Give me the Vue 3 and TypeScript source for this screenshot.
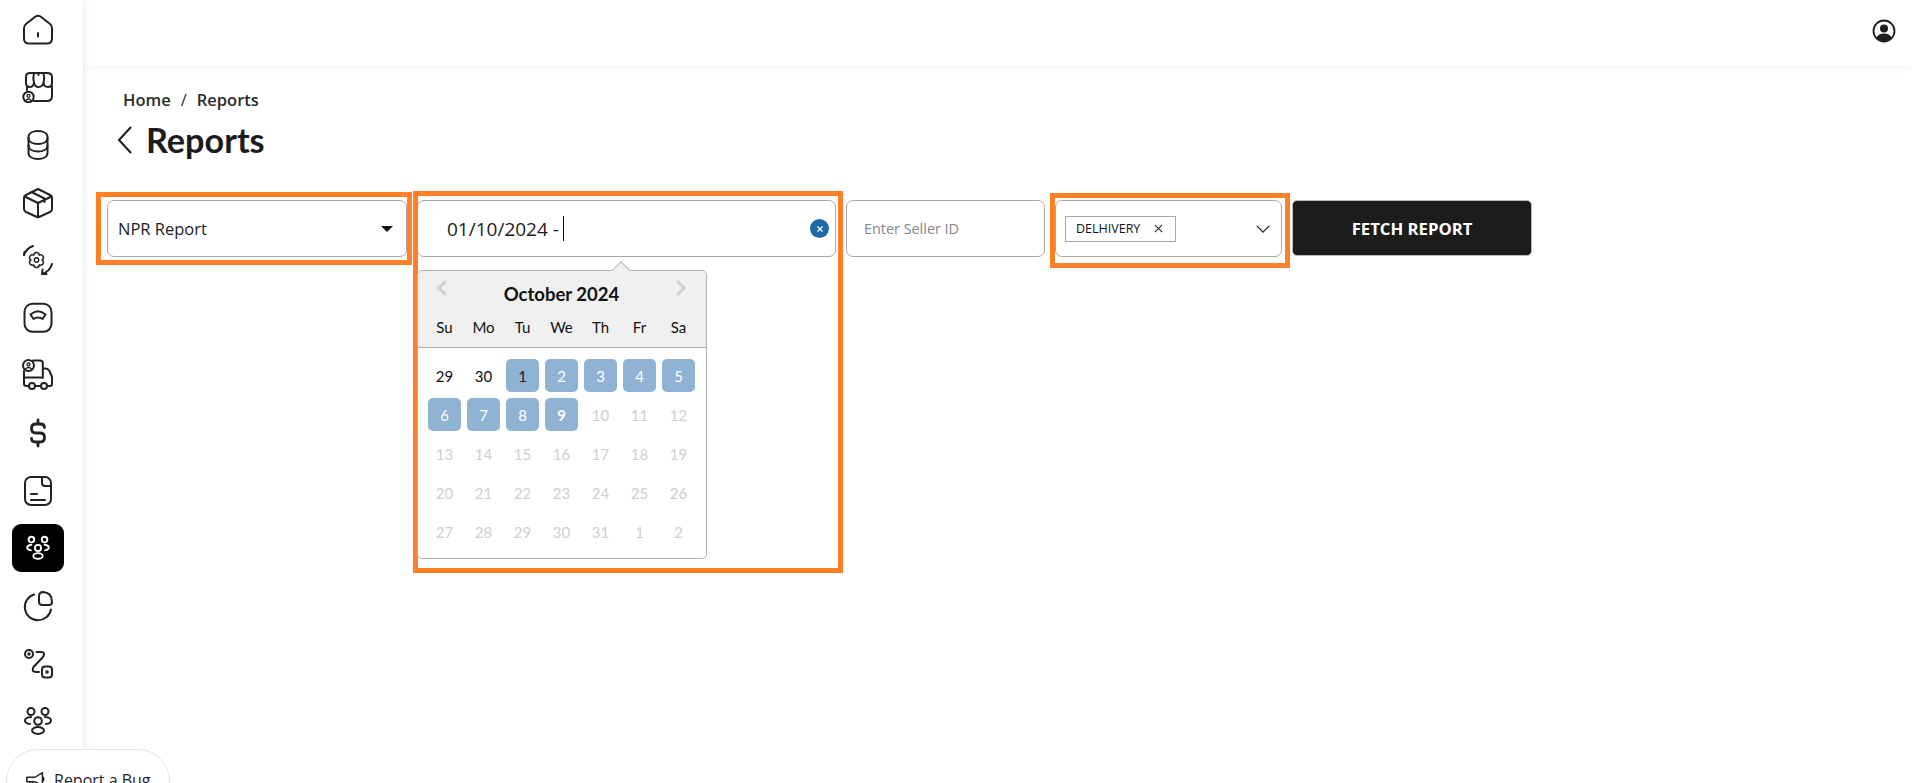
<script setup lang="ts">
interface Day { n: number; cls: string }
const weekdays: string[] = ['Su', 'Mo', 'Tu', 'We', 'Th', 'Fr', 'Sa']
const seq: number[] = [29, 30, 1, 2, 3, 4, 5, 6, 7, 8, 9, 10, 11, 12, 13, 14, 15, 16, 17, 18, 19, 20, 21, 22, 23, 24, 25, 26, 27, 28, 29, 30, 31, 1, 2]
const days: Day[] = seq.map((n, i) => {
  let cls = 'off'
  if (i < 2) cls = 'plain'
  else if (i === 2) cls = 'sel first'
  else if (i < 10) cls = 'sel'
  else if (i === 10) cls = 'sel today'
  return { n, cls }
})
</script>

<template>
  <div class="page">
    <aside class="side">
      <a class="nav"><svg viewBox="0 0 32 32"><path d="M2 14Q2 11.500 4 10L13.500 2.500Q16 .8 18.500 2.500L28 10Q30 11.500 30 14V24.500Q30 29.500 25 29.500H7Q2 29.500 2 24.500Z"/><path d="M16 19V22.500"/></svg></a>
      <a class="nav"><svg viewBox="0 0 32 32"><path d="M4 12V6Q4 2 8 2H25Q30 2 30 6V12Q30 16 26 16Q22 16 21.500 12Q20 16 16.500 16Q13 16 12 12Q11 16 8 16Q4 16 4 12Z"/><path d="M12 2.500Q10.500 7 12 12M21.500 2.500Q23 7 21.500 12M16.500 2.500V4"/><path d="M5 16V19M30 15V25Q30 30 25 30H12"/><circle cx="6.500" cy="26" r="5.200"/><circle cx="6.500" cy="24.800" r="1.500" stroke-width="1.300"/><path d="M3.800 29.500Q6.500 26.500 9.200 29.500" stroke-width="1.300"/></svg></a>
      <a class="nav"><svg viewBox="0 0 32 32"><path d="M6.500 8C6.500 4 11 2 16 2S25.500 4 25.500 8V24C25.500 28 21 30 16 30S6.500 28 6.500 24Z"/><path d="M6.500 9C6.500 13 11 15 16 15S25.500 13 25.500 9M6.500 16.500C6.500 20.500 11 22.500 16 22.500S25.500 20.500 25.500 16.500"/></svg></a>
      <a class="nav"><svg viewBox="0 0 32 32"><path d="M16 2L28 8Q30 9 30 11V22Q30 24 28 25L17 30Q16 30.500 15 30L4 25Q2 24 2 22V11Q2 9 4 8Z"/><path d="M2.500 9.500L16 16L29.500 9.500M16 16V30M9.500 5L22.500 11.500V15"/></svg></a>
      <a class="nav"><svg viewBox="0 0 32 32"><path d="M2 11A15 15 0 0 1 11 2"/><path d="M2 11L2.500 8M30 20A15 15 0 0 1 20 30M20 30L20.500 25.500M20 30L24.500 30"/><path stroke-width="1.500" d="M20 16A2.700 2.700 0 0 1 17.250 20.800A2.700 2.700 0 0 1 11.750 20.800A2.700 2.700 0 0 1 9 16A2.700 2.700 0 0 1 11.750 11.200A2.700 2.700 0 0 1 17.250 11.200A2.700 2.700 0 0 1 20 16Z"/><circle cx="14.500" cy="16" r="2.200" stroke-width="1.400"/></svg></a>
      <a class="nav"><svg viewBox="0 0 32 32"><rect x="2.500" y="1.800" width="27" height="28" rx="8"/><path d="M8.500 12.500Q16 6 23.500 12.500L20.500 17Q16 14 11.500 17Z"/></svg></a>
      <a class="nav"><svg viewBox="0 0 32 32"><path d="M11 1.500H18Q20.800 1.500 20.800 4V19M2 12V25Q2 27 5 27H7M13 27H19M25 27H28Q30 27 30 25V18L27.500 12Q26 9.500 23.500 9.500H21M2.500 18.500H20.800"/><circle cx="6.500" cy="6.500" r="5.500"/><circle cx="6.500" cy="5.500" r="1.500" stroke-width="1.300"/><path d="M3.500 10Q6.500 7 9.500 10" stroke-width="1.300"/><circle cx="10" cy="27" r="3"/><circle cx="22" cy="27" r="3"/></svg></a>
      <a class="nav"><svg viewBox="0 0 32 32"><path class="thick" d="M22.500 10.500Q22.500 7 18.500 7H14Q9.500 7 9.500 11.500Q9.500 16 14 16H18Q22.500 16 22.500 20.500Q22.500 25 18 25H14Q9.500 25 9.500 21.500M16 3V7M16 25V29"/></svg></a>
      <a class="nav"><svg viewBox="0 0 32 32"><rect x="3" y="2" width="26" height="28" rx="6"/><path d="M20 2.500V8Q20 11 23 11H28.500M9 19H15M9 25H23"/></svg></a>
      <a class="nav active"><svg viewBox="0 0 32 32"><circle cx="9" cy="7" r="3"/><circle cx="23" cy="7" r="3"/><circle cx="16" cy="16" r="3.300"/><path d="M9 12.500Q4.500 13 4.500 15.500Q4.500 18 8.500 18.500M23 12.500Q27.500 13 27.500 15.500Q27.500 18 23.500 18.500"/><ellipse cx="16" cy="24.500" rx="5" ry="3"/></svg></a>
      <a class="nav"><svg viewBox="0 0 32 32"><path d="M12 4.500A13.200 13.200 0 1 0 29 19.500"/><path d="M17 6.500Q17 2 21 2Q30 2.500 30 12Q30 15 27 15H20.500Q17 15 17 11.500Z"/></svg></a>
      <a class="nav"><svg viewBox="0 0 32 32"><circle cx="7" cy="7" r="4"/><circle cx="7" cy="7" r=".8"/><path d="M14.500 5H19Q24 5 21 10L11.500 20Q9 25 14 25H17"/><rect x="20" y="19.500" width="10" height="11" rx="3"/><circle cx="25" cy="25" r=".8"/></svg></a>
      <a class="nav"><svg viewBox="0 0 32 32"><circle cx="9" cy="6.500" r="3.500"/><circle cx="23" cy="6.500" r="3.500"/><circle cx="16" cy="16" r="3.800"/><path d="M9 12Q3 12.500 3 15.500Q3 18.500 8 19M23 12Q29 12.500 29 15.500Q29 18.500 24 19"/><ellipse cx="16" cy="25.500" rx="6" ry="3.500"/></svg></a>
    </aside>

    <div class="bug">
      <svg viewBox="0 0 24 20"><path d="M2 7H11L19 2V16L11 12H2ZM5 12V18H9L8 12M19 6Q22 9 19 12"/></svg>
      <span>Report a Bug</span>
    </div>

    <header class="top">
      <svg class="user" viewBox="0 0 24 24"><circle cx="12" cy="12" r="10.500"/><circle class="fill" cx="12" cy="9.500" r="4"/><path class="fill" d="M4.500 18.500Q6.500 14.500 12 14.500Q17.500 14.500 19.500 18.500Q16 22 12 22Q8 22 4.500 18.500Z"/></svg>
    </header>

    <main class="main">
      <nav class="crumbs"><span>Home</span><i>/</i><span>Reports</span></nav>
      <h1 class="title">
        <svg viewBox="0 0 18 30"><path d="M15 2L3 15L15 28"/></svg>
        <span>Reports</span>
      </h1>

      <div class="filters">
        <div class="field report">
          <span>NPR Report</span>
          <b class="caret"></b>
          <div class="frame f1"></div>
        </div>

        <div class="field date">
          <span class="value">01/10/2024 -</span><span class="cursor"></span>
          <span class="clear"><svg viewBox="0 0 10 10"><path d="M2.500 2.500L7.500 7.500M7.500 2.500L2.500 7.500"/></svg></span>
          <div class="frame f2"></div>
          <div class="cal">
            <div class="pointer"></div>
            <div class="cal-head">
              <div class="cal-title">
                <svg class="arrow" viewBox="0 0 12 16"><path d="M9.500 2L3 8L9.500 14"/></svg>
                <span>October 2024</span>
                <svg class="arrow" viewBox="0 0 12 16"><path d="M2.500 2L9 8L2.500 14"/></svg>
              </div>
              <div class="grid weeks"><span v-for="w in weekdays" :key="w">{{ w }}</span></div>
            </div>
            <div class="grid days">
              <span v-for="(d, i) in days" :key="i" :class="d.cls">{{ d.n }}</span>
            </div>
          </div>
        </div>

        <div class="field seller"><span>Enter Seller ID</span></div>

        <div class="field carrier">
          <span class="tag">DELHIVERY
            <svg viewBox="0 0 12 12"><path d="M2 2L10 10M10 2L2 10"/></svg>
          </span>
          <svg class="chev" viewBox="0 0 18 10"><path d="M2 1.500L9 8.500L16 1.500"/></svg>
          <div class="frame f3"></div>
        </div>

        <button class="fetch">FETCH REPORT</button>
      </div>
    </main>
  </div>
</template>

<style>
html, body { margin: 0; background: #fff; overflow: hidden; }
</style>

<style scoped>
.page {
  position: relative;
  width: 1912px;
  height: 783px;
  overflow: hidden;
  display: grid;
  grid-template-columns: 83px 1fr;
  grid-template-rows: 66px 1fr;
  font-family: "Open Sans", sans-serif;
  color: #1c1c1c;
  background: #fff;
}
.side {
  grid-row: 1 / 3;
  z-index: 2;
  background: #fff;
  box-shadow: 2px 0 6px rgba(0, 0, 0, .08);
  padding-top: 1px;
  display: grid;
  grid-auto-rows: 57.6px;
  justify-items: center;
  align-items: center;
}
.nav {
  width: 52px;
  height: 48px;
  margin-left: -7px;
  border-radius: 9px;
  display: flex;
  align-items: center;
  justify-content: center;
  color: #222;
}
.nav svg {
  width: 32px;
  height: 32px;
  fill: none;
  stroke: currentColor;
  stroke-width: 2;
  stroke-linecap: round;
  stroke-linejoin: round;
}
.nav .thick { stroke-width: 2.800; }
.active { background: #000; color: #fff; }
.active svg { width: 30px; height: 30px; }
.bug {
  position: absolute;
  z-index: 3;
  left: 6px;
  top: 749px;
  width: 164px;
  height: 70px;
  box-sizing: border-box;
  border: 1px solid #e4e4e4;
  border-radius: 32px;
  background: #fff;
  display: flex;
  align-items: flex-start;
  gap: 7px;
  padding: 19px 0 0 18px;
  font-size: 16px;
  line-height: 22px;
  color: #222;
}
.bug svg {
  width: 22px;
  height: 20px;
  margin-top: 1px;
  fill: none;
  stroke: #222;
  stroke-width: 1.600;
  stroke-linejoin: round;
}
.top {
  grid-column: 2;
  background: #fff;
  box-shadow: 0 2px 8px rgba(0, 0, 0, .05);
  display: flex;
  justify-content: flex-end;
  align-items: flex-start;
  padding: 19px 16px 0 0;
  box-sizing: border-box;
  z-index: 1;
}
.user {
  width: 24px;
  height: 24px;
  fill: none;
  stroke: #1c1c1c;
  stroke-width: 1.800;
}
.user .fill { fill: #1c1c1c; stroke: none; }
.main {
  grid-column: 2;
  padding: 23px 0 0 24px;
  min-width: 0;
}
.crumbs {
  display: flex;
  gap: 10px;
  margin-left: 16px;
  font-size: 16.500px;
  font-weight: 600;
  line-height: 22px;
  color: #2a2a2a;
}
.crumbs i { font-style: normal; font-weight: 400; }
.title {
  margin: 7px 0 0 9px;
  display: flex;
  align-items: center;
  gap: 12px;
  height: 44px;
  font-family: Lato, sans-serif;
  font-size: 34.200px;
  font-weight: 700;
  color: #1c1c1c;
}
.title span { margin-top: -2px; }
.title svg {
  width: 18px;
  height: 30px;
  fill: none;
  stroke: #1c1c1c;
  stroke-width: 2;
}
.filters {
  margin-top: 38px;
  display: flex;
  align-items: flex-start;
  gap: 10px;
}
.field {
  position: relative;
  flex: none;
  height: 57px;
  box-sizing: border-box;
  border: 1px solid #a9a9a9;
  border-radius: 7px;
  display: flex;
  align-items: center;
  background: #fff;
}
.frame {
  position: absolute;
  box-sizing: border-box;
  border: 5px solid #ff8027;
  pointer-events: none;
  z-index: 2;
}
.f1 { left: -12px; right: -6px; top: -9px; bottom: -9px; }
.f2 { left: -5px; right: -8px; top: -10px; bottom: -317px; }
.f3 { left: -6px; right: -9px; top: -8px; bottom: -12px; }
.report {
  width: 300px;
  padding: 0 13px 0 10px;
  justify-content: space-between;
  font-size: 16.500px;
}
.caret {
  width: 0;
  height: 0;
  border-left: 6px solid transparent;
  border-right: 6px solid transparent;
  border-top: 6px solid #111;
}
.date {
  width: 419px;
  padding: 0 6px 0 29px;
  font-size: 19px;
}
.cursor {
  width: 1.500px;
  height: 25px;
  margin-left: 4px;
  background: #111;
}
.clear {
  margin-left: auto;
  width: 19px;
  height: 19px;
  border-radius: 50%;
  background: #1f69a4;
  display: flex;
  align-items: center;
  justify-content: center;
}
.clear svg {
  width: 10px;
  height: 10px;
  fill: none;
  stroke: #fff;
  stroke-width: 1.300;
}
.cal {
  position: absolute;
  z-index: 3;
  left: -1px;
  top: 69px;
  width: 290px;
  height: 289px;
  box-sizing: border-box;
  border: 1px solid #b2b2b2;
  border-radius: 5px;
  background: #fff;
  font-family: Lato, sans-serif;
  font-size: 15px;
}
.pointer {
  position: absolute;
  left: 196px;
  top: -7px;
  width: 13px;
  height: 13px;
  transform: rotate(45deg);
  background: #f0f0f0;
  border-left: 1px solid #b9b9b9;
  border-top: 1px solid #b9b9b9;
}
.cal-head {
  position: relative;
  height: 76px;
  background: #f0f0f0;
  border-bottom: 1px solid #b2b2b2;
  border-radius: 4px 4px 0 0;
}
.cal-title {
  display: flex;
  justify-content: space-between;
  padding: 8px 16px 0 15px;
  height: 31px;
  box-sizing: content-box;
  font-size: 18.500px;
  font-weight: 700;
  color: #111;
  line-height: 28px;
}
.cal-title span { padding-top: .5px; }
.arrow {
  width: 18px;
  height: 18px;
  fill: none;
  stroke: #cfcfcf;
  stroke-width: 2.600;
}
.grid {
  display: grid;
  grid-template-columns: repeat(7, 33px);
  column-gap: 6px;
  padding-left: 10px;
  text-align: center;
}
.weeks { margin-top: 7px; color: #111; line-height: 20px; }
.days {
  padding-top: 11px;
  row-gap: 6px;
  grid-auto-rows: 33px;
}
.days span {
  display: flex;
  align-items: center;
  justify-content: center;
  border-radius: 5px;
}
.plain { color: #111; }
.off { color: #d2cece; }
.sel { background: #8fb3d2; color: #fff; }
.first { color: #222; }
.today { font-weight: 700; }
.seller {
  width: 199px;
  padding-left: 17px;
  font-size: 14.400px;
  color: #868686;
}
.carrier {
  width: 227px;
  padding: 0 9px;
  justify-content: space-between;
}
.tag {
  width: 111px;
  height: 26px;
  box-sizing: border-box;
  border: 1px solid #a9a9a9;
  padding: 0 11px 0 10px;
  display: flex;
  align-items: center;
  justify-content: space-between;
  font-size: 12.500px;
  color: #111;
}
.tag svg {
  width: 11px;
  height: 11px;
  fill: none;
  stroke: #222;
  stroke-width: 1.100;
}
.chev {
  width: 16px;
  height: 10px;
  margin-right: 1px;
  fill: none;
  stroke: #222;
  stroke-width: 1.500;
}
.fetch {
  flex: none;
  width: 240px;
  height: 56px;
  border: 1px solid #bbb;
  border-radius: 5px;
  background: #1c1c1c;
  color: #fff;
  font-family: "Open Sans", sans-serif;
  font-size: 16.700px;
  font-weight: 700;
}
</style>
